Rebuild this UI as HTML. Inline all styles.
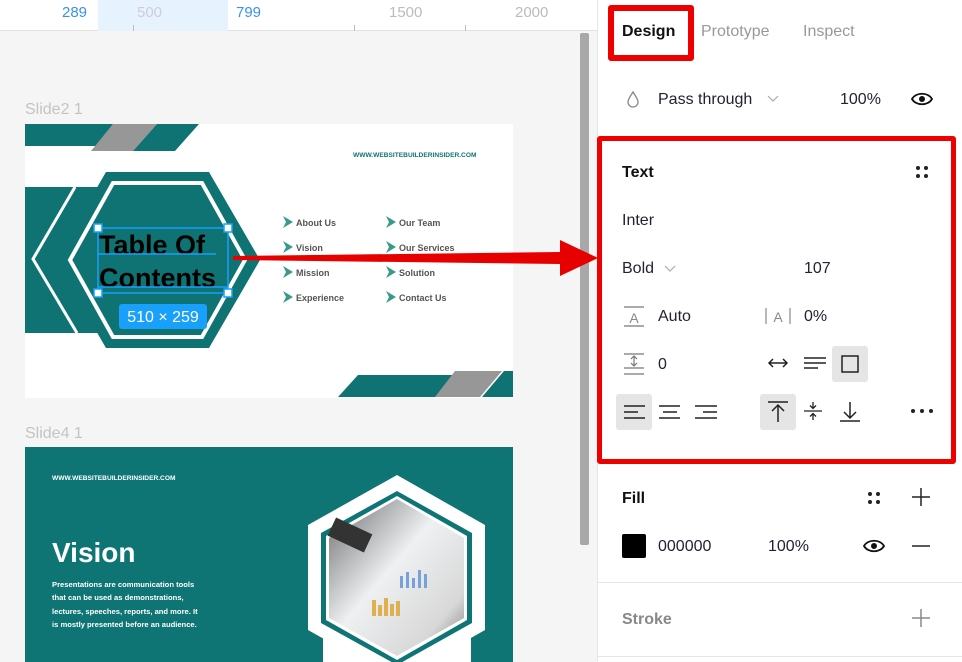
<!DOCTYPE html>
<html><head><meta charset="utf-8"><style>
*{margin:0;padding:0;box-sizing:border-box}
body{width:962px;height:662px;overflow:hidden;background:#f5f5f5;font-family:"Liberation Sans",Arial,sans-serif;position:relative}
.a{position:absolute;white-space:nowrap}
.p{font-size:16px;color:#222;line-height:20px}
</style></head><body>
<!-- ruler -->
<div class="a" style="left:0;top:0;width:597px;height:31px;background:#fff;border-bottom:1px solid #e2e2e2"></div>
<div class="a" style="left:98px;top:0;width:130px;height:31px;background:#e6f3fe"></div>
<div class="a" style="left:62px;top:4px;font-size:15px;color:#3a93e6">289</div>
<div class="a" style="left:137px;top:4px;font-size:15px;color:#ccd">500</div>
<div class="a" style="left:236px;top:4px;font-size:15px;color:#3a93e6">799</div>
<div class="a" style="left:389px;top:4px;font-size:15px;color:#bbb">1500</div>
<div class="a" style="left:515px;top:4px;font-size:15px;color:#bbb">2000</div>
<div class="a" style="left:133px;top:25px;width:1px;height:6px;background:#bbb"></div>
<div class="a" style="left:354px;top:25px;width:1px;height:6px;background:#bbb"></div>
<div class="a" style="left:465px;top:25px;width:1px;height:6px;background:#bbb"></div>
<div class="a" style="left:580px;top:33px;width:9px;height:512px;background:#a8a8a8;border-radius:2px"></div>
<div class="a" style="left:25px;top:101px;font-size:16px;color:#c4c4c4">Slide2 1</div>
<div class="a" style="left:25px;top:425px;font-size:16px;color:#c4c4c4">Slide4 1</div>

<svg class="a" style="left:0;top:0" width="597" height="662">
<rect x="25" y="124" width="488" height="274" fill="#fff"/>
<polygon points="25,124 113,124 97,146 25,146" fill="#0f7373"/>
<polygon points="113,124 157,124 133,151 91,151" fill="#979797"/>
<polygon points="157,124 199,124 175,151 133,151" fill="#0f7373"/>
<polygon points="358,375 453,375 437,397 338,397" fill="#0f7373"/>
<polygon points="455,371 502,371 480,397 435,397" fill="#979797"/>
<polygon points="504,371 513,371 513,397 482,397" fill="#0f7373"/>
<rect x="25" y="187" width="90" height="146" fill="#0f7373"/>
<polyline points="75,187 33,259 77,333" fill="none" stroke="#fff" stroke-width="3"/>
<polygon points="106,172 209,172 260,260 209,348 106,348 55,260" fill="#0f7373"/>
<polygon points="113,183 202,183 245,260 202,337 113,337 70,260" fill="none" stroke="#fff" stroke-width="4"/>
<g font-size="9" font-weight="bold" fill="#555">
<text x="296" y="226">About Us</text><text x="296" y="251">Vision</text><text x="296" y="276">Mission</text><text x="296" y="301">Experience</text>
<text x="399" y="226">Our Team</text><text x="399" y="251">Our Services</text><text x="399" y="276">Solution</text><text x="399" y="301">Contact Us</text>
</g>
<g fill="#3a9a8a">
<polygon points="283,216 293,222 283,228 286,222"/><polygon points="283,241 293,247 283,253 286,247"/><polygon points="283,266 293,272 283,278 286,272"/><polygon points="283,291 293,297 283,303 286,297"/>
<polygon points="386,216 396,222 386,228 389,222"/><polygon points="386,241 396,247 386,253 389,247"/><polygon points="386,266 396,272 386,278 389,272"/><polygon points="386,291 396,297 386,303 389,297"/>
</g>
<text x="353" y="157" font-size="6.6" font-weight="bold" fill="#0f7373">WWW.WEBSITEBUILDERINSIDER.COM</text>
<text x="99" y="254" font-size="27" font-weight="bold" fill="#000">Table Of</text>
<text x="99" y="287" font-size="27" font-weight="bold" fill="#000">Contents</text>
<rect x="98" y="228" width="130" height="65" fill="none" stroke="#18a0fb" stroke-width="1.5"/>
<line x1="98" y1="254" x2="216" y2="254" stroke="#18a0fb" stroke-width="1.5"/>
<line x1="98" y1="287" x2="228" y2="287" stroke="#18a0fb" stroke-width="1.5"/>
<g fill="#fff" stroke="#18a0fb" stroke-width="1.5">
<rect x="94" y="224" width="8" height="8"/><rect x="224" y="224" width="8" height="8"/><rect x="94" y="289" width="8" height="8"/><rect x="224" y="289" width="8" height="8"/></g>
<rect x="119" y="304" width="88" height="25" rx="3" fill="#18a0fb"/>
<text x="163" y="322" font-size="16" fill="#fff" text-anchor="middle">510 × 259</text>
<polygon points="233,256 560,252 560,240 598,258 560,276 560,264 233,260" fill="#e60000"/>
<rect x="25" y="447" width="488" height="215" fill="#0f7474"/>
<text x="52" y="480" font-size="6.6" font-weight="bold" fill="#fff">WWW.WEBSITEBUILDERINSIDER.COM</text>
<text x="52" y="562" font-size="28" font-weight="bold" fill="#fff">Vision</text>
<g font-size="7.6" font-weight="bold" fill="#fff">
<text x="52" y="587">Presentations are communication tools</text>
<text x="52" y="600">that can be used as demonstrations,</text>
<text x="52" y="614">lectures, speeches, reports, and more. It</text>
<text x="52" y="627">is mostly presented before an audience.</text></g>
<defs><linearGradient id="g" x1="0" y1="0" x2="1" y2="1"><stop offset="0" stop-color="#6a6a6a"/><stop offset=".45" stop-color="#eef0f2"/><stop offset=".8" stop-color="#d8d8d8"/><stop offset="1" stop-color="#777"/></linearGradient></defs>
<rect x="323" y="630" width="148" height="32" fill="#fff"/>
<polygon points="397,475 485,525 485,630 397,680 308,630 308,525" fill="#fff"/>
<polygon points="397,491 472,533 472,623 397,665 321,623 321,533" fill="#0f7474"/>
<polygon points="397,496 467,536 467,620 397,660 326,620 326,536" fill="#fff"/>
<polygon points="397,499 464,538 464,618 397,656 329,618 329,538" fill="url(#g)"/>
<rect x="330" y="525" width="40" height="20" fill="#333" transform="rotate(25 350 535)"/>
<g fill="#e0b050"><rect x="372" y="600" width="4" height="16"/><rect x="378" y="605" width="4" height="11"/><rect x="384" y="598" width="4" height="18"/><rect x="390" y="604" width="4" height="12"/><rect x="396" y="601" width="4" height="15"/></g>
<g fill="#7aa0d8"><rect x="400" y="576" width="3" height="12"/><rect x="406" y="572" width="3" height="16"/><rect x="412" y="578" width="3" height="10"/><rect x="418" y="570" width="3" height="18"/><rect x="424" y="574" width="3" height="14"/></g>
</svg>

<div class="a" style="left:597px;top:0;width:365px;height:662px;background:#fff;border-left:1px solid #e5e5e5"></div>
<div class="a" style="left:608px;top:5px;width:86px;height:56px;border:6px solid #e00;border-radius:3px"></div>
<div class="a p" style="left:622px;top:22px;font-weight:bold;color:#111">Design</div>
<div class="a p" style="left:701px;top:22px;color:#999">Prototype</div>
<div class="a p" style="left:803px;top:22px;color:#999">Inspect</div>
<svg class="a" style="left:626px;top:90px" width="14" height="18"><path d="M7 2 C4 7 2 9 2 12 a5 5 0 0 0 10 0 C12 9 10 7 7 2Z" fill="none" stroke="#888" stroke-width="1.3"/></svg>
<div class="a p" style="left:658px;top:90px;color:#223">Pass through</div>
<svg class="a" style="left:767px;top:95px" width="12" height="8"><path d="M1 1 L6 6 L11 1" fill="none" stroke="#aaa" stroke-width="1.2"/></svg>
<div class="a p" style="left:840px;top:90px;color:#223">100%</div>
<svg class="a" style="left:911px;top:91px" width="22" height="16"><path d="M1 8 C5 1 17 1 21 8 C17 15 5 15 1 8Z" fill="none" stroke="#111" stroke-width="1.8"/><circle cx="11" cy="8" r="3" fill="#111"/></svg>

<div class="a" style="left:597px;top:136px;width:359px;height:328px;border:5px solid #e00;border-radius:3px"></div>
<div class="a p" style="left:622px;top:163px;font-weight:bold;color:#111">Text</div>
<svg class="a" style="left:914px;top:164px" width="16" height="16"><g fill="#222"><circle cx="4" cy="4" r="2"/><circle cx="12" cy="4" r="2"/><circle cx="4" cy="12" r="2"/><circle cx="12" cy="12" r="2"/></g></svg>
<div class="a p" style="left:622px;top:211px;color:#223">Inter</div>
<div class="a p" style="left:622px;top:259px;color:#223">Bold</div>
<svg class="a" style="left:664px;top:265px" width="12" height="8"><path d="M1 1 L6 6 L11 1" fill="none" stroke="#aaa" stroke-width="1.2"/></svg>
<div class="a p" style="left:804px;top:259px;color:#223">107</div>
<svg class="a" style="left:623px;top:305px" width="22" height="22"><path d="M1 2H21M1 21H21" stroke="#777" stroke-width="1.2"/><text x="11" y="18" font-size="14" fill="#888" text-anchor="middle" font-family="Liberation Sans">A</text></svg>
<div class="a p" style="left:658px;top:307px;color:#223">Auto</div>
<svg class="a" style="left:764px;top:305px" width="28" height="22"><path d="M2 3V19M26 3V19" stroke="#888" stroke-width="1.2"/><text x="14" y="17" font-size="14" fill="#888" text-anchor="middle" font-family="Liberation Sans">A</text></svg>
<div class="a p" style="left:804px;top:307px;color:#223">0%</div>
<svg class="a" style="left:623px;top:352px" width="22" height="24"><path d="M1 2H21M1 16H21M1 22H21M11 5V13M8 7L11 4L14 7M8 11L11 14L14 11" fill="none" stroke="#777" stroke-width="1.2"/></svg>
<div class="a p" style="left:658px;top:355px;color:#223">0</div>
<svg class="a" style="left:767px;top:356px" width="22" height="14"><path d="M2 7H20M6 3L2 7L6 11M16 3L20 7L16 11" fill="none" stroke="#222" stroke-width="1.5"/></svg>
<svg class="a" style="left:804px;top:356px" width="22" height="14"><path d="M0 2H22M0 7H22M0 12H14" stroke="#222" stroke-width="1.5"/></svg>
<div class="a" style="left:832px;top:346px;width:36px;height:36px;background:#e5e5e5;border-radius:3px"></div>
<svg class="a" style="left:841px;top:355px" width="18" height="18"><rect x="1" y="1" width="16" height="16" fill="none" stroke="#222" stroke-width="1.5"/></svg>
<div class="a" style="left:616px;top:394px;width:36px;height:36px;background:#e5e5e5;border-radius:3px"></div>
<div class="a" style="left:760px;top:394px;width:36px;height:36px;background:#e5e5e5;border-radius:3px"></div>
<svg class="a" style="left:623px;top:404px" width="100" height="16"><path d="M1 2H22M1 8H15M1 14H22M36 2H57M40 8H54M36 14H57M72 2H94M80 8H94M72 14H94" stroke="#222" stroke-width="1.4"/></svg>
<svg class="a" style="left:766px;top:400px" width="100" height="24"><path d="M2 2H22M12 22V5M6 11L12 5L18 11" fill="none" stroke="#222" stroke-width="1.5"/><path d="M38 11H56M47 2V8M44 5.5L47 8.5L50 5.5M47 20V14M44 16.5L47 13.5L50 16.5" fill="none" stroke="#222" stroke-width="1.3"/><path d="M74 21H94M84 2V18M78 12L84 18L90 12" fill="none" stroke="#222" stroke-width="1.5"/></svg>
<svg class="a" style="left:910px;top:408px" width="24" height="6"><g fill="#222"><circle cx="3" cy="3" r="2"/><circle cx="12" cy="3" r="2"/><circle cx="21" cy="3" r="2"/></g></svg>

<div class="a p" style="left:622px;top:489px;font-weight:bold;color:#111">Fill</div>
<svg class="a" style="left:866px;top:490px" width="16" height="16"><g fill="#222"><circle cx="4" cy="4" r="2"/><circle cx="12" cy="4" r="2"/><circle cx="4" cy="12" r="2"/><circle cx="12" cy="12" r="2"/></g></svg>
<svg class="a" style="left:912px;top:488px" width="18" height="18"><path d="M9 0V18M0 9H18" stroke="#222" stroke-width="1.5"/></svg>
<div class="a" style="left:622px;top:534px;width:24px;height:24px;background:#000;border-radius:2px"></div>
<div class="a p" style="left:658px;top:537px;color:#223">000000</div>
<div class="a p" style="left:768px;top:537px;color:#223">100%</div>
<svg class="a" style="left:863px;top:538px" width="22" height="16"><path d="M1 8 C5 1 17 1 21 8 C17 15 5 15 1 8Z" fill="none" stroke="#111" stroke-width="1.8"/><circle cx="11" cy="8" r="3" fill="#111"/></svg>
<svg class="a" style="left:912px;top:544px" width="18" height="4"><path d="M0 2H18" stroke="#222" stroke-width="1.5"/></svg>
<div class="a" style="left:598px;top:582px;width:364px;height:1px;background:#e5e5e5"></div>
<div class="a p" style="left:622px;top:610px;font-weight:bold;color:#888">Stroke</div>
<svg class="a" style="left:912px;top:609px" width="18" height="18"><path d="M9 0V18M0 9H18" stroke="#888" stroke-width="1.5"/></svg>
<div class="a" style="left:598px;top:656px;width:364px;height:1px;background:#e5e5e5"></div>
</body></html>
